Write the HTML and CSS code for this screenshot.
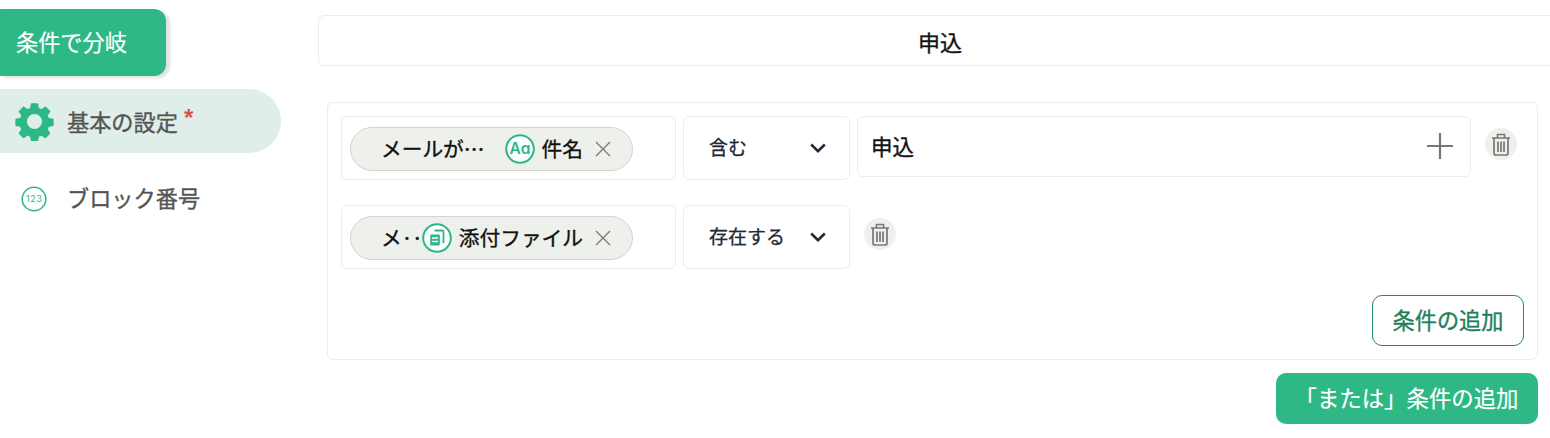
FILE: index.html
```html
<!DOCTYPE html>
<html lang="ja">
<head>
<meta charset="utf-8">
<title>条件で分岐</title>
<link rel="stylesheet" href="styles.css">
</head>
<body>
<div class="page">
  <aside class="sidebar">
    <div class="block-tag">条件で分岐</div>
    <nav class="nav">
      <div class="nav-item active">
        <svg class="gear" viewBox="0 0 40 40"><path fill="#2db886" stroke="#2db886" stroke-width="1.500" stroke-linejoin="round" fill-rule="evenodd" d="M17 2h6l1 4.800 3.200 1.300 4-2.700 4.300 4.300-2.700 4 1.300 3.200 4.800 1v6l-4.800 1-1.300 3.200 2.700 4-4.300 4.300-4-2.700-3.200 1.300-1 4.800h-6l-1-4.800-3.200-1.300-4 2.700-4.300-4.300 2.700-4-1.300-3.200-4.800-1v-6l4.800-1 1.300-3.200-2.700-4 4.300-4.300 4 2.700 3.200-1.300zM20 11.500a8.500 8.500 0 1 0 0 17 8.500 8.500 0 0 0 0-17z"/></svg>
        <span class="nav-label">基本の設定</span><span class="req">*</span>
      </div>
      <div class="nav-item second">
        <svg class="num-icon" viewBox="0 0 26 26"><circle cx="13" cy="13" r="11.800" fill="none" stroke="#2db886" stroke-width="1.500"/><text x="13.300" y="16.200" text-anchor="middle" class="num-text">123</text></svg>
        <span class="nav-label">ブロック番号</span>
      </div>
    </nav>
  </aside>
  <main class="main">
    <div class="title-box">申込</div>
    <section class="panel">
      <div class="cond-row first">
        <div class="field-box">
          <div class="chip">
            <span class="chip-source">メールが…</span>
            <svg class="type-icon" viewBox="0 0 30 30"><circle cx="15" cy="15" r="13.800" fill="#fff" stroke="#2db886" stroke-width="2"/><text x="15" y="20" text-anchor="middle" class="aa-text">Aɑ</text></svg>
            <span class="chip-name">件名</span>
            <svg class="chip-x" viewBox="0 0 16 16"><path d="M1 1l14 14M15 1L1 15" stroke="#77787a" stroke-width="1.300" fill="none"/></svg>
          </div>
        </div>
        <div class="op-select"><span class="op-text">含む</span><svg class="chev" viewBox="0 0 16 10"><path d="M1.200 1.500L8 8.200l6.800-6.700" fill="none" stroke="#1f2937" stroke-width="2.500"/></svg></div>
        <div class="value-box">
          <span class="value-text">申込</span>
          <svg class="plus" viewBox="0 0 26 26"><path d="M13 0v26M0 13h26" stroke="#77787a" stroke-width="2.200" fill="none"/></svg>
        </div>
        <button class="trash-btn"><svg viewBox="0 0 20 23"><path d="M1 5h18M6.500 4.500V1.500h7v3M3 5.500v14.500a2 2 0 0 0 2 2h10a2 2 0 0 0 2-2V5.500M7 8.500v10.500M10 8.500v10.500M13 8.500v10.500" fill="none" stroke="#77787a" stroke-width="1.700"/></svg></button>
      </div>
      <div class="cond-row">
        <div class="field-box">
          <div class="chip">
            <span class="chip-source">メ‥</span>
            <svg class="type-icon" viewBox="0 0 30 30"><circle cx="15" cy="15" r="13.800" fill="#fff" stroke="#2db886" stroke-width="2"/><path d="M12.500 7.500h7.500a1.500 1.500 0 0 1 1.500 1.500v11" fill="none" stroke="#2db886" stroke-width="1.800"/><path d="M9 11.500h8a.8.8 0 0 1 .8.8v9.400a.8.8 0 0 1-.8.800H9a.8.8 0 0 1-.8-.8v-9.400a.8.8 0 0 1 .8-.8z" fill="#2db886"/><path d="M10 15h6M10 18.500h6" stroke="#fff" stroke-width="1.300"/></svg>
            <span class="chip-name">添付ファイル</span>
            <svg class="chip-x" viewBox="0 0 16 16"><path d="M1 1l14 14M15 1L1 15" stroke="#77787a" stroke-width="1.300" fill="none"/></svg>
          </div>
        </div>
        <div class="op-select"><span class="op-text">存在する</span><svg class="chev" viewBox="0 0 16 10"><path d="M1.200 1.500L8 8.200l6.800-6.700" fill="none" stroke="#1f2937" stroke-width="2.500"/></svg></div>
        <button class="trash-btn lower"><svg viewBox="0 0 20 23"><path d="M1 5h18M6.500 4.500V1.500h7v3M3 5.500v14.500a2 2 0 0 0 2 2h10a2 2 0 0 0 2-2V5.500M7 8.500v10.500M10 8.500v10.500M13 8.500v10.500" fill="none" stroke="#77787a" stroke-width="1.700"/></svg></button>
      </div>
      <div class="panel-foot"><button class="add-btn"><span class="btn-text">条件の追加</span></button></div>
    </section>
    <div class="or-row"><button class="or-btn"><span class="btn-text">「または」条件の追加</span></button></div>
  </main>
</div>
</body>
</html>
```
FILE: styles.css
```css
* { box-sizing: border-box; }
html, body { margin: 0; padding: 0; background: #fff; overflow: hidden; }
body { width: 1550px; height: 438px; font-family: "Noto Sans CJK JP", "Noto Sans", sans-serif; }
.page { display: flex; align-items: flex-start; }
.sidebar { width: 318px; flex: none; padding-top: 9px; }
.block-tag { width: 166px; height: 67px; background: #2db886; color: #fff; font-size: 22.200px; line-height: 65px; padding-left: 16px; border-radius: 0 12px 12px 0; box-shadow: 4px 2px 3px rgba(0,0,0,.12); -webkit-text-stroke: .2px currentColor; }
.nav { margin-top: 13px; width: 281px; }
.nav-item { display: flex; align-items: center; height: 64px; color: #555; font-size: 22.200px; font-weight: 400; border-radius: 0 32px 32px 0; }
.nav-item.active { background: #e0eee9; }
.nav-item.second { margin-top: 14px; padding-bottom: 4px; }
.nav-label { -webkit-text-stroke: .35px currentColor; }
.gear { width: 39px; height: 39px; margin-left: 15px; margin-right: 13px; flex: none; }
.num-icon { width: 26px; height: 26px; margin-left: 21px; margin-right: 20px; flex: none; position: relative; top: 2px; }
.num-text { font-family: "Inter", sans-serif; font-size: 9px; letter-spacing: .6px; fill: #2db886; }
.req { color: #d9534f; font-size: 24px; font-weight: 700; margin-left: 6px; margin-top: -6px; line-height: 1; font-family: "Liberation Sans", sans-serif; }
.main { flex: none; width: 1240px; padding-top: 15px; }
.title-box { height: 51px; border: 1px solid #ececec; border-radius: 6px; text-align: center; font-size: 22px; font-weight: 400; color: #111; line-height: 50px; padding-left: 24px; padding-right: 20px; -webkit-text-stroke: .35px currentColor; }
.panel { margin: 36px 0 0 9px; width: 1211px; height: 258px; border: 1px solid #ececec; border-radius: 6px; padding: 13px; }
.cond-row { display: flex; align-items: flex-start; gap: 7px; height: 64px; }
.cond-row + .cond-row { margin-top: 25px; }
.field-box { width: 335px; height: 64px; border: 1px solid #ececec; border-radius: 6px; padding: 10px 8px; flex: none; }
.chip { width: 283px; height: 44px; background: #eef0ec; border: 1px solid #d2d4d2; border-radius: 22px; display: flex; align-items: center; padding-left: 30px; padding-right: 21px; color: #111; font-size: 20.700px; font-weight: 400; line-height: 40px; }
.chip-source { flex: 1; white-space: nowrap; overflow: hidden; padding-bottom: 2px; -webkit-text-stroke: .35px currentColor; }
.type-icon { width: 30px; height: 30px; flex: none; margin-right: 7px; }
.aa-text { font-family: "Inter", sans-serif; font-size: 15.500px; font-weight: 600; fill: #2db886; }
.chip-name { white-space: nowrap; margin-right: 12px; padding-bottom: 2px; -webkit-text-stroke: .35px currentColor; }
.chip-x { width: 16px; height: 16px; flex: none; }
.op-select { width: 167px; height: 64px; flex: none; border: 1px solid #ececec; border-radius: 6px; display: flex; align-items: center; justify-content: space-between; padding: 0 23px 0 25px; color: #1f2937; font-size: 19px; font-weight: 400; }
.op-text { padding-bottom: 4px; -webkit-text-stroke: .3px currentColor; }
.chev { width: 16px; height: 10px; flex: none; }
.value-box { width: 614px; height: 61px; flex: none; border: 1px solid #ececec; border-radius: 6px; display: flex; align-items: center; justify-content: space-between; padding: 0 17px 0 13px; color: #111; font-size: 21.500px; font-weight: 400; }
.value-text { padding-bottom: 2px; -webkit-text-stroke: .35px currentColor; }
.plus { width: 26px; height: 26px; flex: none; margin-bottom: 2px; }
.trash-btn { width: 32px; height: 32px; border: 0; border-radius: 50%; background: #eef0ec; padding: 0; margin: 12px 0 0 7px; display: flex; align-items: center; justify-content: center; flex: none; }
.trash-btn.lower { margin-top: 13px; }
.trash-btn svg { width: 20px; height: 23px; }
.panel-foot { display: flex; justify-content: flex-end; margin-top: 26px; }
.add-btn { width: 152px; height: 51px; border: 1px solid #1f8a64; border-radius: 10px; background: #fff; color: #1f7f5c; font: 400 22.200px "Noto Sans CJK JP", sans-serif; padding: 0 0 3px; -webkit-text-stroke: .35px currentColor; }
.or-row { display: flex; justify-content: flex-end; width: 1220px; margin-top: 13px; }
.or-btn { width: 262px; height: 51px; border: 0; border-radius: 10px; background: #2db886; color: #fff; font: 400 22.400px "Noto Sans CJK JP", sans-serif; padding: 0 1px 3px 0; white-space: nowrap; -webkit-text-stroke: .2px currentColor; }
```
